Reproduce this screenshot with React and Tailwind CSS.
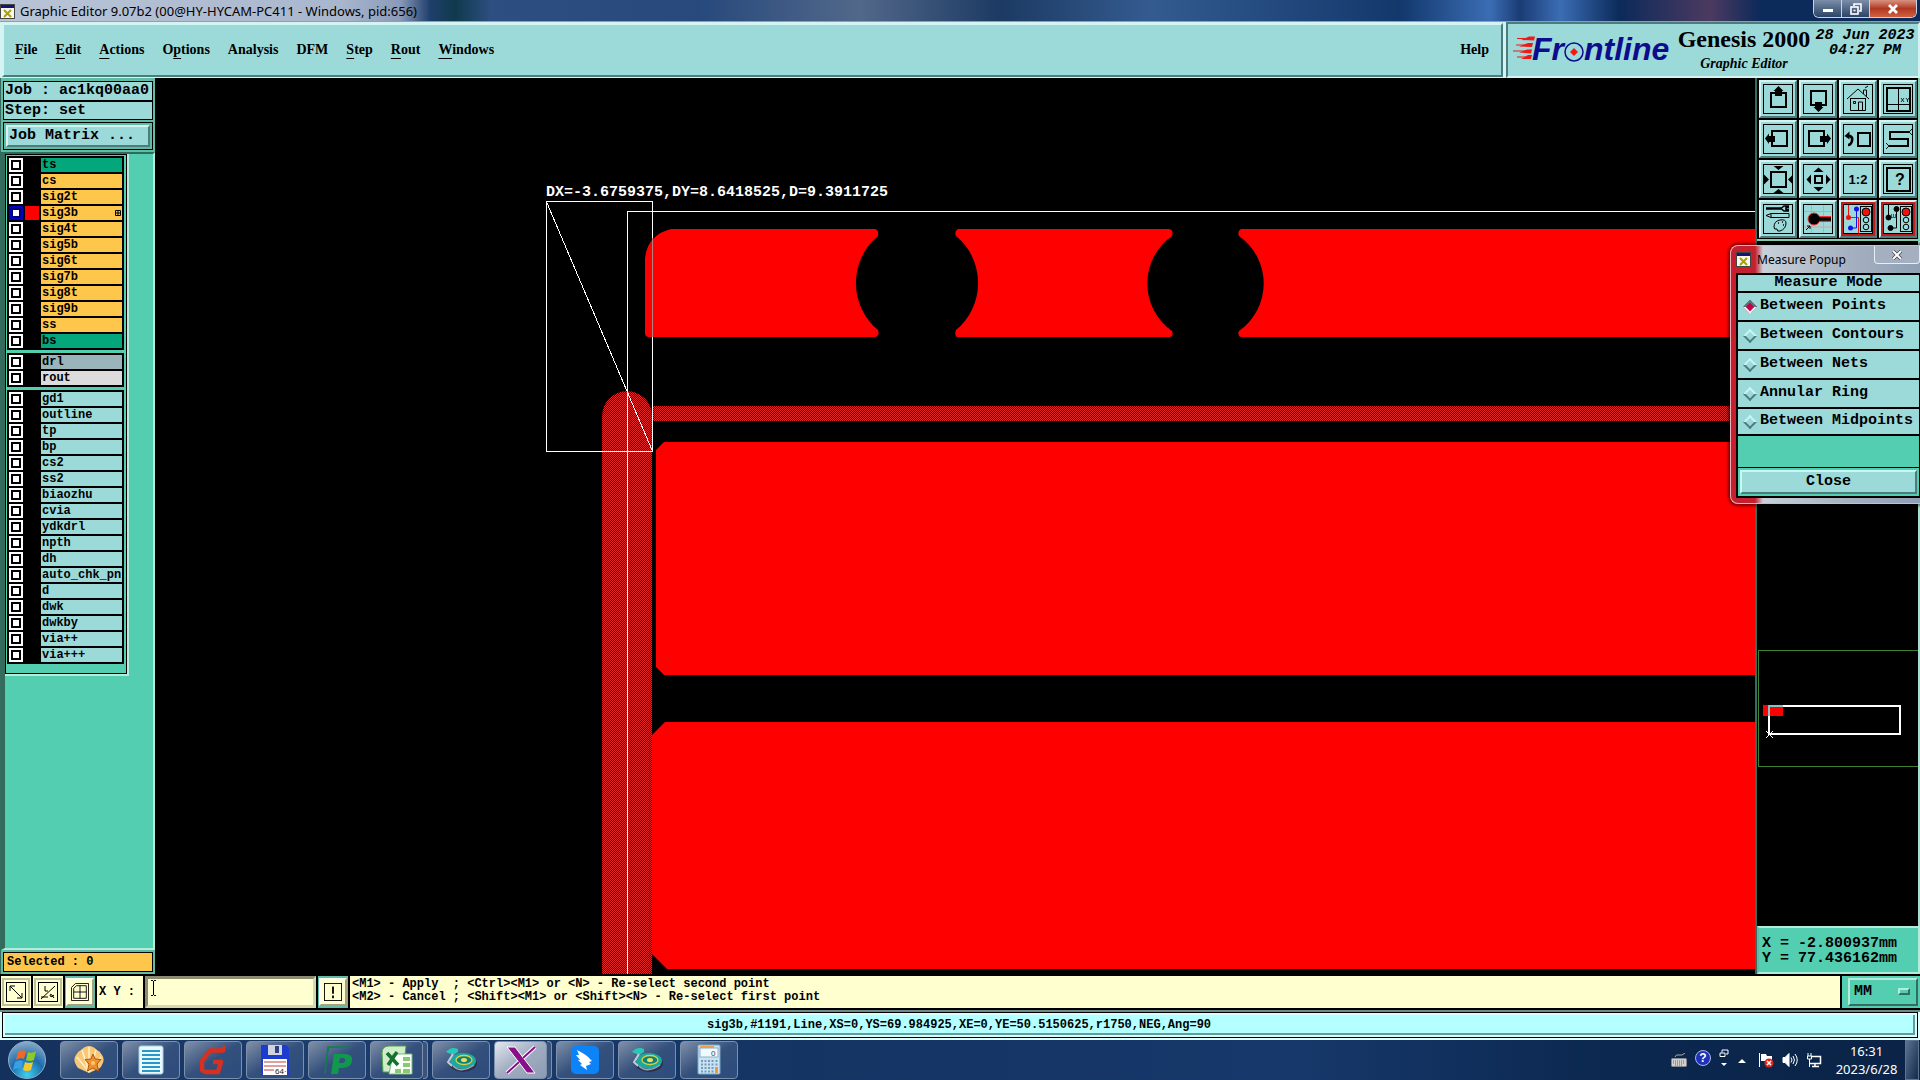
import { useState } from "react";

const MENUS = [
  { key: "F", rest: "ile" },
  { key: "E", rest: "dit" },
  { key: "A", rest: "ctions" },
  { pre: "O", key: "p", rest: "tions" },
  { rest: "Analysis" },
  { rest: "DFM" },
  { key: "S", rest: "tep" },
  { key: "R", rest: "out" },
  { key: "W", rest: "indows" },
];

const LAYER_GROUPS = [
  [
    { name: "ts", color: "bg-[#04a67c]" },
    { name: "cs", color: "bg-[#ffc64c]" },
    { name: "sig2t", color: "bg-[#ffc64c]" },
    { name: "sig3b", color: "bg-[#ffc64c]", active: true },
    { name: "sig4t", color: "bg-[#ffc64c]" },
    { name: "sig5b", color: "bg-[#ffc64c]" },
    { name: "sig6t", color: "bg-[#ffc64c]" },
    { name: "sig7b", color: "bg-[#ffc64c]" },
    { name: "sig8t", color: "bg-[#ffc64c]" },
    { name: "sig9b", color: "bg-[#ffc64c]" },
    { name: "ss", color: "bg-[#ffc64c]" },
    { name: "bs", color: "bg-[#04a67c]" },
  ],
  [
    { name: "drl", color: "bg-[#9ab4bc]" },
    { name: "rout", color: "bg-[#dcdcdc]" },
  ],
  [
    "gd1", "outline", "tp", "bp", "cs2", "ss2", "biaozhu", "cvia", "ydkdrl",
    "npth", "dh", "auto_chk_pnl", "d", "dwk", "dwkby", "via++", "via+++",
  ].map((name) => ({ name, color: "bg-[#9cdada]" })),
];

const MODES = ["Between Points", "Between Contours", "Between Nets", "Annular Ring", "Between Midpoints"];

const MONO = "font-['Liberation_Mono',monospace] font-bold";
const SERIF = "font-['Liberation_Serif',serif] font-bold";
const UI = "font-['Noto_Sans',sans-serif]";

const XIcon = () => (
  <svg viewBox="0 0 15 15" className="size-[15px] shrink-0">
    <rect x="0.5" y="0.5" width="14" height="14" fill="#f8f8e8" stroke="#444" />
    <rect x="1" y="1" width="13" height="3" fill="#14147c" />
    <path d="M4 6l7 7M11 6l-7 7" stroke="#a8a010" strokeWidth="2" />
  </svg>
);

const TitleBar = () => (
  <div className="flex h-[22px] shrink-0 items-start justify-between border-b border-[#8fa0a8] bg-[linear-gradient(90deg,#b9c4d6_0,#a9b7ce_340px,#8a9ab8_400px,#1f3f6c_430px,#0f3a4c_455px,#2c4e80_490px,#27497c_700px,#52688a_860px,#1c3a62_1000px,#345b90_1150px,#12386c_1400px,#3b6db4_1490px,#1a3c74_1520px,#3b6db4_1560px,#0c2a5a_1620px,#4c3a60_1710px,#0c2a5a_1760px)]">
    <div className="flex items-center gap-1 pt-[2px]">
      <XIcon />
      <span className={`${UI} pl-px text-[13px] leading-[18px] text-black`}>
        Graphic Editor 9.07b2 (00@HY-HYCAM-PC411 - Windows, pid:656)
      </span>
    </div>
    <div className="mr-[3px] flex h-[18px] overflow-hidden rounded-b-md border border-t-0 border-[#c8d4e4] text-white">
      <button type="button" aria-label="Minimize" className="grid w-7 place-items-center border-r border-[#c8d4e4] bg-linear-to-b from-[#7c8ea8] to-[#2c4468]">
        <svg viewBox="0 0 12 10" className="h-[10px] w-3"><rect x="1" y="5" width="10" height="3" fill="#fff" /></svg>
      </button>
      <button type="button" aria-label="Restore" className="grid w-7 place-items-center border-r border-[#c8d4e4] bg-linear-to-b from-[#7c8ea8] to-[#2c4468]">
        <svg viewBox="0 0 12 12" className="size-3" fill="none" stroke="#fff" strokeWidth="1.6"><path d="M4 3V1h7v7H9" /><rect x="1" y="4" width="7" height="7" /><path d="M3.500 7.500h2" /></svg>
      </button>
      <button type="button" aria-label="Close window" className="grid w-[46px] place-items-center bg-linear-to-b from-[#d89080] via-[#b03820] to-[#d06040]">
        <svg viewBox="0 0 12 10" className="h-[10px] w-3"><path d="M2 1l8 8M10 1l-8 8" stroke="#fff" strokeWidth="2.800" /></svg>
      </button>
    </div>
  </div>
);

const FrontlineLogo = () => (
  <svg viewBox="0 0 164 36" className="mt-[9px] h-9 w-[164px] shrink-0 overflow-visible" role="img" aria-label="Frontline">
    <path d="M5 5.500h14M4 12h13M1 18h15M5 24h11" stroke="#f01818" strokeWidth="1.200" />
    <path d="M9 7l8-3.500h6l-1 4zM7 13.500l9-3.500h5l-1 4zM7 19.500l8-3h5l-1 4zM9 26l7-4h4l-1 4z" fill="#f01818" />
    <g className="font-['Liberation_Sans',sans-serif] text-[32px] font-bold italic" fill="#0c0c8c">
      <text x="20" y="27">Fr</text>
      <text x="72" y="27">ntline</text>
    </g>
    <circle cx="62" cy="19" r="9" fill="#9cdada" stroke="#0c0c8c" strokeWidth="1.500" />
    <path d="M62 15l4 4-4 4-4-4z" fill="#f01818" />
  </svg>
);

const Header = () => (
  <header className="flex h-14 shrink-0 bg-[#d4f4f4]">
    <nav className="my-px ml-[2px] flex flex-1 items-center justify-between border-2 border-t-[#d4f4f4] border-r-[#4c7c7c] border-b-[#4c7c7c] border-l-[#d4f4f4] bg-[#9cdada] pr-3 pl-[11px]">
      <div className="flex gap-[18px]">
        {MENUS.map(({ pre, key, rest }) => (
          <button type="button" key={rest} className={`${SERIF} text-[14px] leading-5 text-black`}>
            {pre}
            {key && <span className="underline underline-offset-4">{key}</span>}
            {rest}
          </button>
        ))}
      </div>
      <button type="button" className={`${SERIF} text-[14px] leading-5 text-black`}>Help</button>
    </nav>
    <div className="ml-[3px] flex border-2 border-t-[#4c7c7c] border-r-[#d4f4f4] border-b-[#d4f4f4] border-l-[#4c7c7c] bg-[#9cdada] pl-1">
      <FrontlineLogo />
      <div className={`${SERIF} flex w-[136px] flex-col items-center text-black`}>
        <h1 className="text-[24px] leading-[30px] whitespace-nowrap">Genesis 2000</h1>
        <p className="text-[14px] leading-5 italic">Graphic Editor</p>
      </div>
      <div className={`${MONO} flex w-[106px] flex-col items-center pt-1 text-[15px] leading-[15px] text-black italic`}>
        <span>28 Jun 2023</span>
        <span>04:27 PM</span>
      </div>
    </div>
  </header>
);

const LayerRow = ({ name, color, active }) => (
  <div className="flex h-[14px] gap-[2px]">
    <input
      type="checkbox"
      id={`layer-${name}`}
      defaultChecked={active}
      className="size-[14px] shrink-0 appearance-none border-2 border-white bg-white shadow-[inset_0_0_0_2px_#000] checked:border-[#0000c0] checked:shadow-[inset_0_0_0_2px_#000080]"
    />
    <span className={active ? "w-[14px] shrink-0 bg-[#ff0000]" : "w-[14px] shrink-0"} />
    <label
      htmlFor={`layer-${name}`}
      className={`${MONO} flex flex-1 items-center justify-between overflow-hidden pl-px text-[12px] leading-[14px] text-black ${color}`}
    >
      {name}
      {active && (
        <svg viewBox="0 0 6 6" className="mr-px size-[6px]"><path d="M.5.5h5v5h-5zM3 0v6M0 3h6" fill="none" stroke="#000" /></svg>
      )}
    </label>
  </div>
);

const Sidebar = () => (
  <aside className="flex w-[155px] shrink-0 flex-col border-l border-[#346c60] bg-[#60bca4]">
    <div className={`${MONO} mx-[2px] mt-[3px] border border-black bg-[#9cdada] text-[15px] text-black`}>
      <div className="border-b-2 border-black pl-px leading-[18px]">Job : ac1kq00aa0</div>
      <div className="pl-px leading-[17px] whitespace-pre">Step: set</div>
    </div>
    <div className="mx-[2px] mt-[2px] border border-black p-[2px]">
      <button type="button" className={`${MONO} block w-full border-2 border-t-[#d4f4f4] border-r-[#4c7c7c] border-b-[#4c7c7c] border-l-[#d4f4f4] bg-[#9cdada] pl-px text-left text-[15px] leading-[18px] text-black`}>
        Job Matrix ...
      </button>
    </div>
    <div className="mt-[2px] flex-1 border-t-2 border-r-2 border-b-2 border-l-4 border-t-[#2c6c5c] border-r-[#b4ecdc] border-b-[#b4ecdc] border-l-[#346c5c] bg-[#54ceb0]">
      <div className="w-[124px] border-r-2 border-b-2 border-[#b4ecdc]">
        <div className="flex flex-col gap-[3px] border border-black px-px pt-px pb-[9px]">
          {LAYER_GROUPS.map((group, i) => (
            <div key={i} className="mr-px flex flex-col gap-[2px] bg-black p-[2px]">
              {group.map((layer) => (
                <LayerRow key={layer.name} {...layer} />
              ))}
            </div>
          ))}
        </div>
      </div>
    </div>
    <div className={`${MONO} mx-[2px] mt-[2px] mb-[2px] border border-black bg-[#ffc64c] pl-[3px] text-[12px] leading-[18px] text-black`}>
      Selected : 0
    </div>
  </aside>
);

const BoardCanvas = () => (
  <div className="relative min-w-0 flex-1 overflow-hidden bg-black">
    <svg className="absolute inset-0 h-full w-full" role="img" aria-label="Board view">
      <defs>
        <pattern id="hatch" width="2" height="2" patternUnits="userSpaceOnUse">
          <rect width="2" height="2" fill="#300606" />
          <path d="M0 0h1v1h-1zM1 1h1v1h-1z" fill="#e42424" />
        </pattern>
      </defs>
      <g transform="translate(-155 -78)">
        <g fill="#ff0000">
          <path d="M671 229H875Q879 230 878 236A61 61 0 0 0 878 330Q880 335 876 337H649Q645 337 645 333V259Q647 235 671 229Z" />
          <path d="M958 229H1169Q1174 230 1172 236A58 58 0 0 0 1172 331Q1174 336 1170 337H957Q954 335 956 330A61 61 0 0 0 956 236Q954 231 958 229Z" />
          <path d="M1241 229H4000V337H1241Q1237 335 1239 331A58 58 0 0 0 1239 236Q1237 231 1241 229Z" />
          <path d="M664 442H4000V675H664L656 667V450Z" />
          <path d="M665 722H4000V969H667L652 954V735Z" />
        </g>
        <path d="M602 4000V416A25 25 0 0 1 652 416V4000Z" fill="url(#hatch)" />
        <rect x="652" y="406" width="3400" height="15" fill="url(#hatch)" />
        <g fill="none" stroke="#fff" shapeRendering="crispEdges">
          <path d="M627.500 4000V211.500H4000" />
          <path d="M546.500 201.500H652.500V451.500H546.500Z" />
          <path d="M547 203L652 450" />
        </g>
        <path d="M652.500 238V337" stroke="#b08080" shapeRendering="crispEdges" />
        <text x="546" y="196" fill="#fff" className={`${MONO} text-[15px]`}>DX=-3.6759375,DY=8.6418525,D=9.3911725</text>
      </g>
    </svg>
  </div>
);

const Traffic = () => (
  <>
    <rect x="17.500" y="2.500" width="11" height="25" fill="#9cdada" stroke="#000" />
    <circle cx="23" cy="8" r="4" fill="#f01010" stroke="#000" />
    <circle cx="23" cy="16" r="2.800" fill="none" stroke="#000" />
    <circle cx="23" cy="23" r="2.800" fill="none" stroke="#000" />
  </>
);

// Drawings live on a 30x30 grid inside each tool button.
const TOOLS = [
  { label: "Pan up", art: <><rect x="8" y="9" width="15" height="14" fill="none" strokeWidth="2" /><path d="M15.500 2l5 5H19v5h-7V7h-1.500z" stroke="none" /></> },
  { label: "Pan down", art: <><rect x="8" y="7" width="15" height="14" fill="none" strokeWidth="2" /><path d="M15.500 28l5-5H19v-5h-7v5h-1.500z" stroke="none" /></> },
  { label: "Home", art: <><path d="M4 15L15 5l11 10M7.500 14v12.500h15V14M20.500 10V6h3v7M22 4l3-2M7.500 14.500h15M15.500 26V18h4v8" fill="none" /><path d="M10.500 17.500h2v2h-2z" fill="none" /></> },
  { label: "Coordinates", art: <><rect x="4" y="4" width="23" height="23" fill="none" strokeWidth="2" /><path d="M15.500 4v23M4 20.500h23" fill="none" /><path d="M18 14l3 4M21 14l-3 4M23 14l1.500 2L26 14M24.500 16v2" fill="none" strokeWidth=".8" /></> },
  { label: "Pan left", art: <><rect x="9" y="7" width="15" height="15" fill="none" strokeWidth="2" /><path d="M2 14.500l4-5V12h6v6H6v2z" stroke="none" /></> },
  { label: "Pan right", art: <><rect x="6" y="7" width="15" height="15" fill="none" strokeWidth="2" /><path d="M28 14.500l-4-5V12h-7v6h7v2z" stroke="none" /></> },
  { label: "Previous view", art: <><rect x="15" y="9" width="12" height="13" fill="none" strokeWidth="2" /><path d="M5 12h2q3 1 2 5-1 4-4 4" fill="none" strokeWidth="2.500" /><path d="M1.500 12l5-4.500v8z" stroke="none" /></> },
  { label: "Snake view", art: <><path d="M26 8H7v7h18v7H6" fill="none" strokeWidth="2" /><path d="M29 5l-3 3 3 3M3 19l3 3-3 3" fill="none" strokeWidth=".9" /></> },
  { label: "Zoom in", art: <><rect x="8" y="8" width="15" height="15" fill="none" strokeWidth="2" /><path d="M10.500 2h10l-5 4zM10.500 29h10l-5-4zM1 10.500v10l5-5zM30 10.500v10l-5-5z" stroke="none" /></> },
  { label: "Zoom out", art: <><rect x="12" y="12" width="7" height="7" fill="none" strokeWidth="2" /><path d="M10.500 8h10l-5-4.500zM10.500 23h10l-5 4.500zM8 10.500v10l-4.500-5zM23 10.500v10l4.500-5z" stroke="none" /></> },
  { label: "Scale 1:2", art: <text x="15" y="20" textAnchor="middle" stroke="none" className="font-['Liberation_Sans',sans-serif] text-[13px] font-bold">1:2</text> },
  { label: "Help", art: <><rect x="4" y="4" width="23" height="23" fill="none" strokeWidth="2" /><text x="17" y="21" textAnchor="middle" stroke="none" className="font-['Liberation_Sans',sans-serif] text-[16px] font-bold">?</text></> },
  { label: "Options", art: <><path d="M3 4.500h15" strokeWidth="2.500" /><path d="M26 2h-5l-3 2.500L21 7h5M26 3.500h-3v2h3" fill="none" strokeWidth="1.600" /><path d="M3 11.500l5-2v4zM8 9.500h18v4H8" fill="none" /><path d="M11 23q0-6 6-7 6-1 6 3 0 6-6 8-3 1-3-2-3 1-3-2z" fill="none" /><path d="M15 19h1M19 18h1M20 21h1" strokeWidth="1.500" /></> },
  { label: "Snap", art: <><path d="M1 7.500h28M1 23h28M8.500 1v28M20.500 1v28" stroke="#d8a0a0" /><path d="M11 15h17" stroke="#f03030" strokeWidth="6" /><circle cx="11" cy="15" r="6" stroke="#f03030" /><path d="M12 15h16" strokeWidth="3.500" /><path d="M3 26l4-4M4 22h3v3" fill="none" /></> },
  { label: "Net colors", alert: true, art: <><path d="M5.500 1v12M5.500 13.500h10V29" fill="none" stroke="#f01010" /><path d="M13.500 4v20H7" fill="none" stroke="#1010f0" /><circle cx="5.500" cy="13.500" r="2.500" fill="#f01010" stroke="none" /><circle cx="13.500" cy="5" r="2.500" fill="#1010f0" stroke="none" /><circle cx="7.500" cy="24" r="2.500" fill="#1010f0" stroke="none" /><Traffic /></> },
  { label: "Net check", alert: true, art: <><path d="M5.500 1v12M13.500 4v20H7" fill="none" /><path d="M6 13.500h7M8.500 10v3.500M10.500 10v3.500M12.500 10v3.500" fill="none" stroke="#f01010" /><circle cx="5.500" cy="13.500" r="2.500" /><circle cx="13.500" cy="5" r="2.500" /><circle cx="7.500" cy="24" r="2.500" /><Traffic /></> },
];

const ToolButton = ({ label, alert, art }) => (
  <button
    type="button"
    aria-label={label}
    className={`grid h-[38px] place-items-center border-2 border-t-[#d4f4f4] border-r-[#4c7c7c] border-b-[#4c7c7c] border-l-[#d4f4f4] ${alert ? "bg-[#c41c1c]" : "bg-[#9cdada]"}`}
  >
    <svg viewBox="0 0 30 30" className="size-[30px] bg-[#9cdada]" fill="#000" stroke="#000">
      {art}
      <rect x="0.500" y="0.500" width="29" height="29" fill="none" />
    </svg>
  </button>
);

const RightPanel = () => (
  <aside className="flex w-[165px] shrink-0 flex-col border-l-2 border-[#346c60] bg-black">
    <div className="border-r-2 border-b-2 border-[#84ccb4] bg-black pt-[2px] pr-px pb-px pl-[2px]">
      <div className="grid grid-cols-4 gap-[2px]">
        {TOOLS.map((tool) => (
          <ToolButton key={tool.label} {...tool} />
        ))}
      </div>
    </div>
    <div className="flex flex-1 flex-col border-r-2 border-[#a8dcd0] pt-[408px]">
      <svg viewBox="0 0 161 118" className="h-[118px] w-full" fill="none" role="img" aria-label="Overview map">
        <rect x="1.500" y="1.500" width="170" height="116" stroke="#408030" />
        <rect x="6" y="56" width="20" height="11" fill="#ff0000" />
        <rect x="12" y="57" width="131" height="28" stroke="#fff" strokeWidth="2" />
        <path d="M26 57H12V67" stroke="#84c4c4" strokeWidth="2" />
        <path d="M9 82l7 7M16 82l-7 7" stroke="#fff" />
      </svg>
    </div>
    <div className={`${MONO} border-2 border-t-[#b4ecdc] border-r-[#b4ecdc] border-b-[#b4ecdc] border-l-[#60bca4] bg-[#54ceb0] pt-2 pb-[6px] pl-[3px] text-[15px] leading-[15px] text-black`}>
      <p>X = -2.800937mm</p>
      <p>Y = 77.436162mm</p>
    </div>
  </aside>
);

const MeasurePopup = () => {
  const [mode, setMode] = useState(MODES[0]);
  return (
    <section aria-label="Measure Popup" className="absolute top-[167px] right-0 w-[190px] rounded-l-lg border border-r-0 border-[#e8b0b8] bg-[linear-gradient(90deg,#c42030_0,#c42030_24px,#c8d0d8_32px,#a4b0c0_120px,#8ea0b4_100%)] pb-[5px] pl-[5px] shadow-[0_0_3px_2px_rgba(0,0,0,0.5)]">
      <div className="flex h-[27px] items-center justify-between">
        <div className="flex items-center gap-[6px]">
          <XIcon />
          <h2 className={`${UI} text-[12px] leading-4 text-black`}>Measure Popup</h2>
        </div>
        <button type="button" aria-label="Close popup" className="grid h-[18px] w-[46px] place-items-center self-start rounded-b border border-t-0 border-[#e8eef4] bg-[#a4b0c0]">
          <svg viewBox="0 0 12 10" className="h-[10px] w-3"><path d="M2 1l8 8M10 1l-8 8" stroke="#445" strokeWidth="3.500" /><path d="M2 1l8 8M10 1l-8 8" stroke="#fff" strokeWidth="2" /></svg>
        </button>
      </div>
      <div className={`${MONO} border-2 border-r border-black bg-[#54ceb0] text-[15px] text-black`}>
        <div className="bg-[#9cdada] text-center leading-4">Measure Mode</div>
        <div role="radiogroup" aria-label="Measure Mode">
          {MODES.map((m, i) => (
            <div key={m} className={`flex h-[29px] items-center gap-1 border-black bg-[#9cdada] pl-[7px] whitespace-nowrap ${i === MODES.length - 1 ? "border-y-2" : "border-t-2"}`}>
              <input
                type="radio"
                name="measure-mode"
                id={`mode-${i}`}
                checked={mode === m}
                onChange={() => setMode(m)}
                className="mr-px size-[10px] shrink-0 rotate-45 appearance-none border-2 border-t-[#c8f4f4] border-r-[#4c7c7c] border-b-[#4c7c7c] border-l-[#c8f4f4] checked:border-t-[#4c7c7c] checked:border-r-[#e8f4f4] checked:border-b-[#e8f4f4] checked:border-l-[#4c7c7c] checked:bg-[#c40048]"
              />
              <label htmlFor={`mode-${i}`}>{m}</label>
            </div>
          ))}
        </div>
        <div className="h-[31px]" />
        <div className="border-t border-black p-[2px]">
          <button type="button" className="block w-full border-2 border-t-[#c8f8f4] border-r-[#4c7c7c] border-b-[#4c7c7c] border-l-[#c8f8f4] bg-[#9cdada] text-center leading-5">
            Close
          </button>
        </div>
      </div>
    </section>
  );
};

const SmallTool = ({ label, green, children }) => (
  <button type="button" aria-label={label} className={`grid w-[30px] shrink-0 place-items-center ${green ? "bg-[#60bca4]" : "bg-[#ffffd0]"}`}>
    <span className={green ? "border-2 border-t-[#fffff0] border-r-[#a8a080] border-b-[#a8a080] border-l-[#fffff0] bg-[#ffffd0] p-[3px]" : "border-2 border-[#c0c098] bg-[#ffffd0] p-[2px]"}>
      <svg viewBox="0 0 20 20" className={green ? "size-[18px]" : "size-5"} fill="none" stroke="#000">{children}</svg>
    </span>
  </button>
);

const MessageRow = () => (
  <div className={`${MONO} flex h-9 shrink-0 gap-[2px] border-y-2 border-black bg-black text-[12px] text-black`}>
    <div className="flex shrink-0 gap-[2px] pl-px">
      <SmallTool label="Relative"><rect x=".5" y=".5" width="19" height="19" /><path d="M4 4l12 12M4 9V4h5M16 11v5h-5" /></SmallTool>
      <SmallTool label="Angle"><rect x=".5" y=".5" width="19" height="19" /><path d="M3 17L17 4M3 15h7M7 4v5h3" /><path d="M16 13q-2 3-4 1 0-3 2-1l2 3" /></SmallTool>
      <SmallTool label="Grid" green><path d="M.5 5L5 .5h14.500v19H.5zM10 3v14M3 10h14M3 6l3-3h11v14H3z" /></SmallTool>
    </div>
    <div className="flex min-w-0 flex-1 gap-[2px]">
      <label htmlFor="xy" className="w-[46px] shrink-0 bg-[#ffffd0] pl-[2px] leading-[32px] whitespace-pre">X Y :</label>
      <div className="relative flex w-[171px] shrink-0">
        <input
          id="xy"
          className="w-full border-3 border-t-[#8c8c70] border-r-[#d8d8b0] border-b-[#d8d8b0] border-l-[#8c8c70] bg-[#ffffd0] px-1 outline-none"
        />
        <svg viewBox="0 0 7 16" className="pointer-events-none absolute top-1 left-[5px] h-4 w-[7px]" fill="none" stroke="#000"><path d="M1 .5h2M4 .5h2M3.500 1v14M1 15.500h2M4 15.500h2" /></svg>
      </div>
      <SmallTool label="Warning" green><rect x=".5" y=".5" width="19" height="19" /><path d="M10 4v8M10 14v3" strokeWidth="2" /></SmallTool>
      <div className="flex min-w-0 flex-1 flex-col justify-center bg-[#ffffd0] pb-[2px] pl-[2px] leading-[13px] whitespace-pre">
        <p>{"<M1> - Apply  ; <Ctrl><M1> or <N> - Re-select second point"}</p>
        <p>{"<M2> - Cancel ; <Shift><M1> or <Shift><N> - Re-select first point"}</p>
      </div>
    </div>
    <div className="relative w-[78px] shrink-0 bg-[#54ceb0] p-[2px] pl-[6px]">
      <select aria-label="Units" className="h-full w-full appearance-none border-2 border-t-[#b4ecdc] border-r-[#346c60] border-b-[#346c60] border-l-[#b4ecdc] bg-[#54ceb0] pl-1 text-[15px] outline-none">
        <option>MM</option>
        <option>INCH</option>
      </select>
      <span className="pointer-events-none absolute top-3 right-[10px] h-[7px] w-3 border-2 border-t-[#b4ecdc] border-r-[#346c60] border-b-[#346c60] border-l-[#b4ecdc]" />
    </div>
  </div>
);

const StatusBar = () => (
  <div className="h-[30px] shrink-0 border-t-2 border-[#6c8c8c] bg-[#e0ffff] px-[2px] pb-[2px]">
    <div className="h-full border border-black bg-[#d8ffff] p-[2px]">
      <p className={`${MONO} h-full border-r-2 border-b-2 border-[#649c9c] bg-[#b4ffff] text-center text-[12px] leading-5 text-black`}>
        sig3b,#1191,Line,XS=0,YS=69.984925,XE=0,YE=50.5150625,r1750,NEG,Ang=90
      </p>
    </div>
  </div>
);

const DiscIcon = () => (
  <svg viewBox="0 0 34 32" className="h-8 w-[34px]">
    <ellipse cx="19" cy="19" rx="14" ry="9" fill="#303048" />
    <ellipse cx="19" cy="17" rx="13" ry="8" fill="#1ca8a0" />
    <ellipse cx="20" cy="16" rx="8" ry="4.500" fill="#108078" stroke="#d8d040" strokeWidth="1.300" />
    <ellipse cx="20" cy="16" rx="3" ry="2" fill="#e8e060" />
    <path d="M2 8q5-6 12-3v3l-5 3z" fill="#28c8b8" />
    <path d="M9 10L4 18l4 4" fill="none" stroke="#c8c8d8" strokeWidth="2" />
    <path d="M9 22q8 8 21-1" fill="none" stroke="#a0a0b8" strokeWidth="1.500" />
  </svg>
);

const TASKS = [
  { label: "Shell", art: <svg viewBox="0 0 32 32" className="size-8"><path d="M16 29L5 24Q-1 16 3 11 5 7 8 6q4-4 8-4t8 4q3 1 5 5 4 5-2 13z" fill="#f8c878" /><path d="M16 28L4 13M16 28L9 6M16 28V3M16 28L23 6M16 28L28 13" stroke="#fff0c8" strokeWidth="1.500" /><path d="M20 10l2 5 6 .5-4 4.500 1.500 7L20 24l-5.500 3 1.500-7-4-4.500 6-.5z" fill="#f09030" stroke="#b05808" /><circle cx="20" cy="19" r="2" fill="#ffc870" /></svg> },
  { label: "Notes", art: <svg viewBox="0 0 28 30" className="h-[30px] w-7"><rect x="2" y="1" width="24" height="28" rx="2" fill="#eaf8ff" stroke="#a8d0e0" /><path d="M5 6h18M5 10h18M5 14h18M5 18h18M5 22h18M5 26h18" stroke="#2898c8" strokeWidth="1.800" /></svg> },
  { label: "Genesis", art: <svg viewBox="0 0 32 32" className="size-8"><path d="M24 6.500H13L5 17v9l3 2h13l3-10h-8" fill="none" stroke="#d83020" strokeWidth="4.500" strokeLinejoin="round" /><path d="M21 5l8-4-1 7-4 1z" fill="#d83020" /></svg> },
  { label: "Floppy", art: <svg viewBox="0 0 32 32" className="size-8"><path d="M2 1h25l3 3v27H2z" fill="#1c3cd0" /><rect x="9" y="1" width="14" height="10" fill="#d0d4e0" /><rect x="16" y="2" width="4" height="7" fill="#304080" /><rect x="4" y="15" width="24" height="16" fill="#fff" /><path d="M5 18h22M5 22h22M5 26h10" stroke="#c04040" /><text x="16" y="30" fill="#222" className="font-['Liberation_Sans',sans-serif] text-[8px]">64·</text></svg> },
  { label: "P editor", art: <svg viewBox="0 0 32 32" className="size-8"><path d="M4 30L7 3h21M10 3q-3 0-3 5" fill="none" stroke="#108048" strokeWidth="1.500" /><path d="M10 30l3-20h11q8 0 7 7-1 7-10 7h-3l-1 6zM19 14l-1 5h4q4-2 1-5z" fill="#10984c" fillRule="evenodd" /></svg> },
  { label: "Excel", stacked: true, art: <svg viewBox="0 0 32 32" className="size-8"><path d="M1 9q0-7 7-7h17l-3 26-20 0z" fill="#d0ecc8" stroke="#50a050" /><path d="M12 10h19v20H8z" fill="#f8fff8" stroke="#78b878" /><path d="M22 13h7v4h-7zM22 19h7v4h-7zM22 25h7v4h-7zM14 25h6v4h-6z" fill="#8cc870" /><path d="M6 9l11 12M16 8L7 21" stroke="#187030" strokeWidth="3.500" /></svg> },
  { label: "CAM", art: <DiscIcon /> },
  { label: "X server", stacked: true, current: true, art: <svg viewBox="0 0 32 30" className="h-[30px] w-8"><path d="M2 2h8l20 26h-8z" fill="#881088" stroke="#fff" /><path d="M30 2L18 13M14 17L2 28" stroke="#fff" strokeWidth="4" /><path d="M30 2L18 13M14 17L2 28" stroke="#881088" strokeWidth="2" /></svg> },
  { label: "DingTalk", art: <svg viewBox="0 0 30 30" className="size-[30px]"><rect x="1" y="1" width="28" height="28" rx="5" fill="#0c84f8" /><path d="M7 5q10 5 13 9l2 2-3 1 2 2-5 2 1 4-7-5 2-1-4-4 2 0-4-5 3 0z" fill="#fff" /></svg> },
  { label: "CAM tools", art: <DiscIcon /> },
  { label: "Calculator", art: <svg viewBox="0 0 24 32" className="h-8 w-6"><rect x="1" y="1" width="22" height="29" rx="1" fill="#c8e4f4" stroke="#78a8c8" /><rect x="3" y="4" width="18" height="9" fill="#f0faff" stroke="#90b0c8" /><path d="M3 3h14" stroke="#f0a040" strokeWidth="2" /><text x="14" y="12" fill="#345" className="font-['Liberation_Sans',sans-serif] text-[8px]">0</text><path d="M4 17h13M4 20.500h13M4 24h13M4 27.500h13" stroke="#7898b8" strokeWidth="2" strokeDasharray="2 1.500" /><path d="M19.500 16v7" stroke="#7898b8" strokeWidth="2" strokeDasharray="2 1.500" /><rect x="18" y="23" width="3" height="6" fill="#f09830" /></svg> },
];

const TaskButton = ({ label, stacked, current, art }) => (
  <div className="flex h-full w-[58px]">
    <button
      type="button"
      aria-label={label}
      className={`grid h-full flex-1 place-items-center rounded border border-[#7c90ac] ${current ? "bg-linear-to-br from-[#e4e8f0] via-[#a0acc0] to-[#8c9cb4]" : "bg-linear-to-br from-[#8090a8] via-[#34507c] to-[#2c4c7c]"}`}
    >
      {art}
    </button>
    {stacked && <span className="w-[5px] rounded-r border border-l-0 border-[#7c90ac] bg-[#3c547c]" />}
  </div>
);

const Taskbar = () => (
  <footer className="flex h-10 shrink-0 items-center justify-between bg-[linear-gradient(90deg,#14305c_0,#1c3c6c_300px,#143464_800px,#16386a_1300px,#0c2850_1600px,#0a2346_100%)]">
    <div className="flex h-full items-center">
      <button type="button" aria-label="Start" className="grid w-[60px] place-items-center pr-[6px]">
        <svg viewBox="0 0 40 40" className="size-10">
          <defs>
            <radialGradient id="orb" cx=".5" cy=".9" r=".9">
              <stop offset="0" stopColor="#40d0f0" />
              <stop offset=".5" stopColor="#1c6cac" />
              <stop offset="1" stopColor="#8cacc8" />
            </radialGradient>
          </defs>
          <circle cx="20" cy="20" r="18.500" fill="url(#orb)" stroke="#8cb0cc" />
          <path d="M11 12q4-3 8-1l-2 8q-4-2-8 1z" fill="#f06828" />
          <path d="M21 12q4 2 8-1l-2 9q-4 2-8 0z" fill="#90c828" />
          <path d="M8 22q4-3 8-1l-2 8q-4-2-8 1z" fill="#38a0e8" />
          <path d="M18 22q4 2 8 0l-2 8q-4 2-8 0z" fill="#f8c828" />
        </svg>
      </button>
      <div className="flex h-full gap-1 pt-px pb-px">
        {TASKS.map((task) => (
          <TaskButton key={task.label} {...task} />
        ))}
      </div>
    </div>
    <div className="flex h-full items-center text-white">
      <div className="mr-[6px] flex items-center gap-2">
        <svg viewBox="0 0 16 14" className="h-[14px] w-4" fill="none"><path d="M4 4q1-3 4-2t6-2" stroke="#aaa" /><rect x=".5" y="5.500" width="15" height="8" rx="1" fill="#d0d0d0" stroke="#888" /><path d="M2 8h12M2 10h12M4 12h8" stroke="#666" strokeDasharray="1 1" /></svg>
        <svg viewBox="0 0 16 16" className="mb-1 size-4"><circle cx="8" cy="8" r="7.500" fill="#2030b8" stroke="#a8b8e8" /><text x="8" y="12" textAnchor="middle" fill="#fff" className="font-['Liberation_Sans',sans-serif] text-[12px] font-bold">?</text></svg>
        <svg viewBox="0 0 10 18" className="mb-1 h-[18px] w-[10px]" fill="none" stroke="#fff"><path d="M3 3.500V1h6v4H7M1 4h5v3.500H1z" /><path d="M2 14h6l-3 3z" fill="#fff" stroke="none" /></svg>
        <svg viewBox="0 0 8 5" className="mr-1 ml-px h-[5px] w-2"><path d="M0 5l4-4 4 4z" fill="#fff" /></svg>
        <svg viewBox="0 0 16 16" className="size-4"><path d="M1.500 1v14" stroke="#fff" /><path d="M3 2h5l1 2h5v6H8L7 9H3z" fill="#fff" /><circle cx="11" cy="11" r="4.500" fill="#e02818" /><path d="M9 9l4 4M13 9l-4 4" stroke="#fff" strokeWidth="1.500" /></svg>
        <svg viewBox="0 0 16 16" className="size-4" fill="none" stroke="#fff"><path d="M1 5.500h2l4-4v13l-4-4H1z" fill="#fff" /><path d="M9 5.500q2 2.500 0 5M11 4q3 4 0 8M13 2q4.500 6 0 12" /></svg>
        <svg viewBox="0 0 16 16" className="size-4" fill="none" stroke="#fff"><path d="M5 4.500h9.500v7H4M9 12v2.500M6 14.500h7" strokeWidth="1.500" /><path d="M2 1v3M5 1v3M1.500 4h4v3h-4zM3.500 7v8" /></svg>
      </div>
      <div className={`${UI} w-[77px] text-center text-[13px] leading-[18px]`}>
        <div>16:31</div>
        <div>2023/6/28</div>
      </div>
      <button type="button" aria-label="Show desktop" className="mr-px h-full w-[14px] border border-[#5c7490] bg-linear-to-br from-[#5c7490] to-[#142c4c]" />
    </div>
  </footer>
);

export default function App() {
  return (
    <div className="flex h-screen flex-col overflow-hidden bg-black">
      <TitleBar />
      <Header />
      <main className="relative flex min-h-0 flex-1">
        <Sidebar />
        <BoardCanvas />
        <RightPanel />
        <MeasurePopup />
      </main>
      <MessageRow />
      <StatusBar />
      <Taskbar />
    </div>
  );
}
